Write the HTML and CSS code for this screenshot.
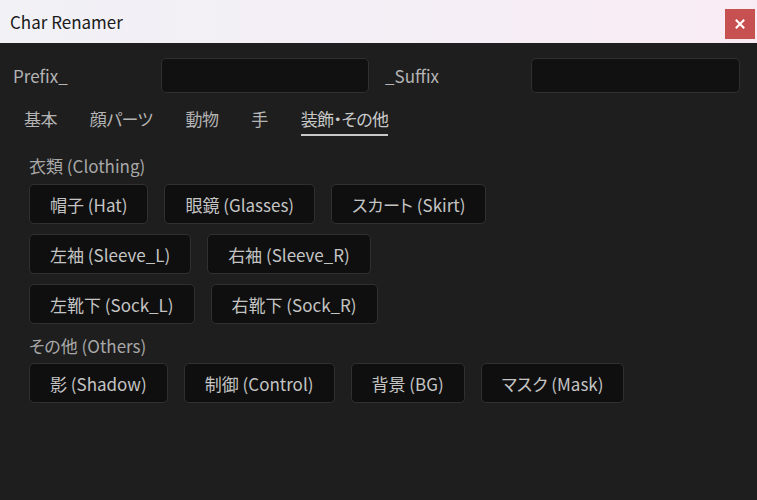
FILE: index.html
```html
<!DOCTYPE html>
<html lang="ja">
<head>
<meta charset="utf-8">
<title>Char Renamer</title>
<link rel="stylesheet" href="styles.css">
</head>
<body>
<div class="window">
  <div class="titlebar">
    <span class="title">Char Renamer</span>
    <button class="close" aria-label="close">
      <svg width="10" height="10" viewBox="0 0 10 10"><path d="M1.5 1.5 L8.5 8.5 M8.5 1.5 L1.5 8.5" stroke="#fff" stroke-width="2" stroke-linecap="square"/></svg>
    </button>
  </div>
  <div class="content">
    <div class="fields">
      <label class="lbl lbl-prefix">Prefix_</label>
      <div class="input in-prefix"></div>
      <label class="lbl lbl-suffix">_Suffix</label>
      <div class="input in-suffix"></div>
    </div>
    <div class="tabs">
      <span class="tab">基本</span>
      <span class="tab">顔パーツ</span>
      <span class="tab">動物</span>
      <span class="tab">手</span>
      <span class="tab active">装飾・その他</span>
    </div>
    <div class="panel">
      <div class="group-title">衣類 (Clothing)</div>
      <div class="btn-row">
        <button class="btn">帽子 (Hat)</button>
        <button class="btn">眼鏡 (Glasses)</button>
        <button class="btn">スカート (Skirt)</button>
      </div>
      <div class="btn-row">
        <button class="btn">左袖 (Sleeve_L)</button>
        <button class="btn">右袖 (Sleeve_R)</button>
      </div>
      <div class="btn-row">
        <button class="btn">左靴下 (Sock_L)</button>
        <button class="btn">右靴下 (Sock_R)</button>
      </div>
      <div class="group-title second">その他 (Others)</div>
      <div class="btn-row">
        <button class="btn">影 (Shadow)</button>
        <button class="btn">制御 (Control)</button>
        <button class="btn">背景 (BG)</button>
        <button class="btn">マスク (Mask)</button>
      </div>
    </div>
  </div>
</div>
</body>
</html>
```
FILE: styles.css
```css
* { box-sizing: border-box; }
html, body {
  margin: 0;
  padding: 0;
  background: #1e1e1e;
  font-family: "Noto Sans CJK JP", "Noto Sans", sans-serif;
  font-feature-settings: "palt";
}
.window {
  width: 757px;
  height: 500px;
  background: #1e1e1e;
  overflow: hidden;
}
.titlebar {
  height: 43px;
  display: flex;
  align-items: center;
  justify-content: space-between;
  background: linear-gradient(to right, #f1f1f6 0%, #f5eef6 60%, #f9ebf4 100%);
}
.title {
  margin-left: 10px;
  font-size: 17px;
  color: #1a1a1a;
  font-feature-settings: normal;
}
.close {
  width: 30px;
  height: 30px;
  margin-right: 2px;
  margin-top: 5px;
  border: none;
  padding: 0;
  background: #c75150;
  display: flex;
  align-items: center;
  justify-content: center;
}
.content {
  padding: 15px 17px 0 13px;
}
.fields {
  display: flex;
  align-items: center;
  height: 35px;
}
.lbl {
  font-size: 17px;
  color: #b4b4b4;
  flex: none;
}
.lbl-prefix { width: 148px; }
.lbl-suffix { width: 146px; margin-left: 16px; }
.input {
  flex: none;
  height: 35px;
  background: #111111;
  border: 1px solid #303030;
  border-radius: 5px;
}
.in-prefix { width: 208px; }
.in-suffix { width: 209px; }
.tabs {
  display: flex;
  gap: 33px;
  margin-top: 12px;
  padding-left: 11px;
  height: 32px;
}
.tab {
  font-size: 17px;
  line-height: 27px;
  color: #b4b4b4;
  height: 32px;
  letter-spacing: -0.6px;
}
.tab.active {
  color: #c8c8c8;
  border-bottom: 2px solid #c8c8c8;
  height: 31px;
}
.panel {
  padding-left: 16px;
  padding-top: 17px;
}
.group-title {
  font-size: 17px;
  line-height: 24px;
  color: #a8a8a8;
  margin-bottom: 6px;
}
.group-title.second {
  margin-top: 9px;
  margin-bottom: 5px;
}
.btn-row {
  display: flex;
  gap: 16px;
  margin-bottom: 10px;
}
.btn {
  height: 40px;
  padding: 0 20px;
  background: #0f0f0f;
  border: 1px solid #303030;
  border-radius: 5px;
  color: #c4c4c4;
  font-family: inherit;
  font-feature-settings: "palt";
  font-size: 17px;
  display: flex;
  align-items: center;
}
```
